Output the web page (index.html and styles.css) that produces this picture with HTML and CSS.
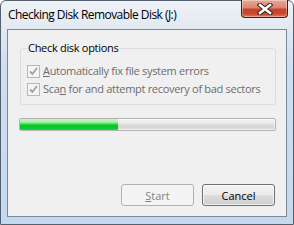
FILE: index.html
```html
<!DOCTYPE html>
<html>
<head>
<meta charset="utf-8">
<link rel="stylesheet" href="styles.css">
</head>
<body>
<div class="window">
  <div class="titlebar">
    <span class="title">Checking Disk Removable Disk (J:)</span>
    <div class="close">
      <svg width="16" height="12" viewBox="0 0 16 12">
        <path d="M3 2 L13 10 M13 2 L3 10" stroke="#3a1f1a" stroke-width="4.6" stroke-linecap="square" fill="none"/>
        <path d="M3 2 L13 10 M13 2 L3 10" stroke="#ffffff" stroke-width="2.6" stroke-linecap="square" fill="none"/>
      </svg>
    </div>
  </div>
  <div class="client">
    <fieldset class="group">
      <legend>Check disk options</legend>
      <div class="row">
        <span class="check"><svg width="11" height="11" viewBox="0 0 11 11"><path d="M2 5.5 L4.5 8 L9 2" stroke="#a2a2a2" stroke-width="1.8" fill="none"/></svg></span>
        <span class="label"><u>A</u>utomatically fix file system errors</span>
      </div>
      <div class="row">
        <span class="check"><svg width="11" height="11" viewBox="0 0 11 11"><path d="M2 5.5 L4.5 8 L9 2" stroke="#a2a2a2" stroke-width="1.8" fill="none"/></svg></span>
        <span class="label">Sca<u>n</u> for and attempt recovery of bad sectors</span>
      </div>
    </fieldset>
    <div class="progress"><div class="fill" style="width:98px"></div></div>
    <div class="buttons">
      <div class="btn disabled"><u>S</u>tart</div>
      <div class="btn">Cancel</div>
    </div>
  </div>
</div>
</body>
</html>
```

FILE: styles.css
```css
html, body {
  margin: 0;
  padding: 0;
  width: 294px;
  height: 225px;
  overflow: hidden;
  background: #ffffff;
}
.window {
  box-sizing: border-box;
  width: 294px;
  height: 225px;
  border: 1px solid #55606e;
  border-radius: 6px 6px 0 0;
  background: linear-gradient(to bottom, #eef2f7 0px, #e2e9f1 28px, #cfdff1 60px, #c3d8ef 225px);
  display: flex;
  flex-direction: column;
  font-family: "Open Sans", "Noto Sans", sans-serif;
  font-size: 11px;
  color: #000;
  white-space: nowrap;
}
.titlebar {
  height: 28px;
  display: flex;
  justify-content: space-between;
  align-items: flex-start;
}
.title {
  margin-left: 7px;
  margin-top: 6px;
  font-size: 12px;
  line-height: 16px;
  color: #000;
  letter-spacing: -0.55px;
}
.close {
  width: 47px;
  height: 18px;
  margin-right: 5px;
  margin-top: -1px;
  box-sizing: border-box;
  border: 1px solid #4a1a12;
  border-top: none;
  border-radius: 0 0 4px 4px;
  background: linear-gradient(to bottom, #e9a999 0%, #dc8570 45%, #c5432a 55%, #c9472c 80%, #e27a5a 100%);
  box-shadow: inset 0 0 0 1px rgba(255,255,255,0.35);
  display: flex;
  align-items: center;
  justify-content: center;
}
.client {
  margin: 0 6px 0 6px;
  height: 188px;
  box-sizing: border-box;
  border: 1px solid #7a8797;
  background: #f0f0f0;
  display: flex;
  flex-direction: column;
}
.group {
  margin: 10px 10px 0 12px;
  padding: 6px 6px 6px 6px;
  border: 1px solid #d5dfe5;
  border-radius: 3px;
  min-width: 0;
}
.group legend {
  padding: 0 1px;
  font-size: 11px;
  line-height: 16px;
  color: #000;
  letter-spacing: -0.3px;
}
.row {
  height: 18px;
  display: flex;
  align-items: center;
}
.check {
  flex: none;
  width: 13px;
  height: 13px;
  box-sizing: border-box;
  border: 1px solid #b8b8b8;
  background: #f4f4f4;
  display: flex;
  align-items: center;
  justify-content: center;
  margin-right: 3px;
}
.label {
  color: #6d6d6d;
  line-height: 16px;
  letter-spacing: -0.3px;
}
.progress {
  margin: 13px 10px 0 11px;
  height: 13px;
  box-sizing: border-box;
  border: 1px solid #b2b2b2;
  border-radius: 2px;
  background: linear-gradient(to bottom, #f3f3f3 0%, #e8e8e8 40%, #dadada 55%, #d6d6d6 80%, #e3e3e3 100%);
  box-shadow: inset 0 0 0 1px rgba(255,255,255,0.6);
  overflow: hidden;
}
.fill {
  height: 100%;
  background: linear-gradient(to bottom, #c9f5c9 0%, #a6eea6 30%, #3ddc4f 45%, #06c52a 60%, #05cc2c 85%, #3ad552 100%);
}
.buttons {
  margin: 53px 11px 0 0;
  display: flex;
  justify-content: flex-end;
  gap: 8px;
}
.btn {
  width: 73px;
  height: 22px;
  box-sizing: border-box;
  border: 1px solid #707070;
  border-radius: 3px;
  background: linear-gradient(to bottom, #f2f2f2 0%, #ebebeb 50%, #dddddd 51%, #cfcfcf 100%);
  box-shadow: inset 0 0 0 1px rgba(255,255,255,0.7);
  display: flex;
  align-items: center;
  justify-content: center;
  font-size: 11px;
  color: #000;
}
.btn.disabled {
  border-color: #adb2b5;
  background: #f4f4f4;
  color: #838383;
  box-shadow: none;
}
```
